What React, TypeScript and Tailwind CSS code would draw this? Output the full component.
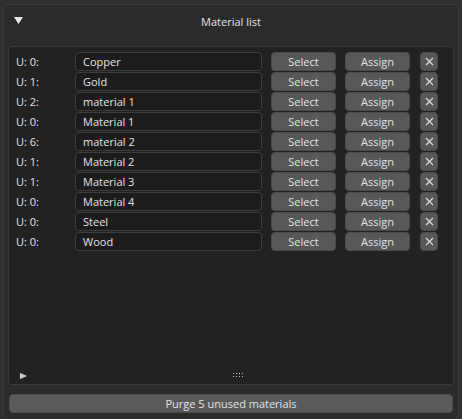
import React from "react";

const rows: [string, string][] = [
  ["U: 0:", "Copper"],
  ["U: 1:", "Gold"],
  ["U: 2:", "material 1"],
  ["U: 0:", "Material 1"],
  ["U: 6:", "material 2"],
  ["U: 1:", "Material 2"],
  ["U: 1:", "Material 3"],
  ["U: 0:", "Material 4"],
  ["U: 0:", "Steel"],
  ["U: 0:", "Wood"],
];

export default function App() {
  return (
    <div
      className="w-[462px] h-[419px] bg-[#303030] pt-[4px] px-[3px] overflow-hidden text-[#e2e2e2] text-[11px] leading-none"
      style={{ fontFamily: '"Open Sans", "Noto Sans", sans-serif' }}
    >
      <div className="h-[416px] rounded-[5px] border border-[#3b3b3b] bg-[#2b2b2b] flex flex-col">
        <div className="h-[32px] flex items-center relative shrink-0">
          <svg className="absolute left-[10px] top-[12px]" width="9" height="7" viewBox="0 0 9 7">
            <polygon points="0,0 9,0 4.5,7" fill="#e8e8e8" />
          </svg>
          <div className="flex-1 text-center">Material list</div>
        </div>
        <div className="mt-[9px] mx-[4px] h-[339px] shrink-0 rounded-[4px] border border-[#3a3a3a] bg-[#222222] flex flex-col pt-[4px] relative">
          {rows.map(([u, name], i) => (
            <div key={i} className="flex items-center h-[20px]">
              <div className="w-[66px] pl-[7px]">{u}</div>
              <div className="w-[187px] h-[19px] rounded-[4px] border border-[#3c3c3c] bg-[#1c1c1c] flex items-center pl-[7px]">
                {name}
              </div>
              <div className="ml-[9px] w-[65px] h-[19px] rounded-[4px] bg-[#585858] border border-[#4a4a4a] flex items-center justify-center">
                Select
              </div>
              <div className="ml-[9px] w-[65px] h-[19px] rounded-[4px] bg-[#585858] border border-[#4a4a4a] flex items-center justify-center">
                Assign
              </div>
              <div className="ml-[10px] w-[18px] h-[19px] rounded-[4px] bg-[#585858] border border-[#4a4a4a] flex items-center justify-center">
                <svg width="9" height="9" viewBox="0 0 9 9">
                  <path d="M1 1 L8 8 M8 1 L1 8" stroke="#e0e0e0" strokeWidth="1.1" />
                </svg>
              </div>
            </div>
          ))}
          <svg className="absolute left-[11px] top-[326px]" width="7" height="6" viewBox="0 0 7 6">
            <polygon points="0,0 7,3 0,6" fill="#cfcfcf" />
          </svg>
          <svg className="absolute left-[224px] top-[326px]" width="11" height="4" viewBox="0 0 11 4">
            {[0, 3, 6, 9].map((x) => (
              <g key={x}>
                <rect x={x} y={0} width="1" height="1" fill="#bdbdbd" />
                <rect x={x} y={3} width="1" height="1" fill="#bdbdbd" />
              </g>
            ))}
          </svg>
        </div>
        <div className="mt-[9px] mx-[5px] h-[19px] shrink-0 rounded-[4px] bg-[#5a5a5a] border border-[#4c4c4c] flex items-center justify-center">
          Purge 5 unused materials
        </div>
      </div>
    </div>
  );
}
